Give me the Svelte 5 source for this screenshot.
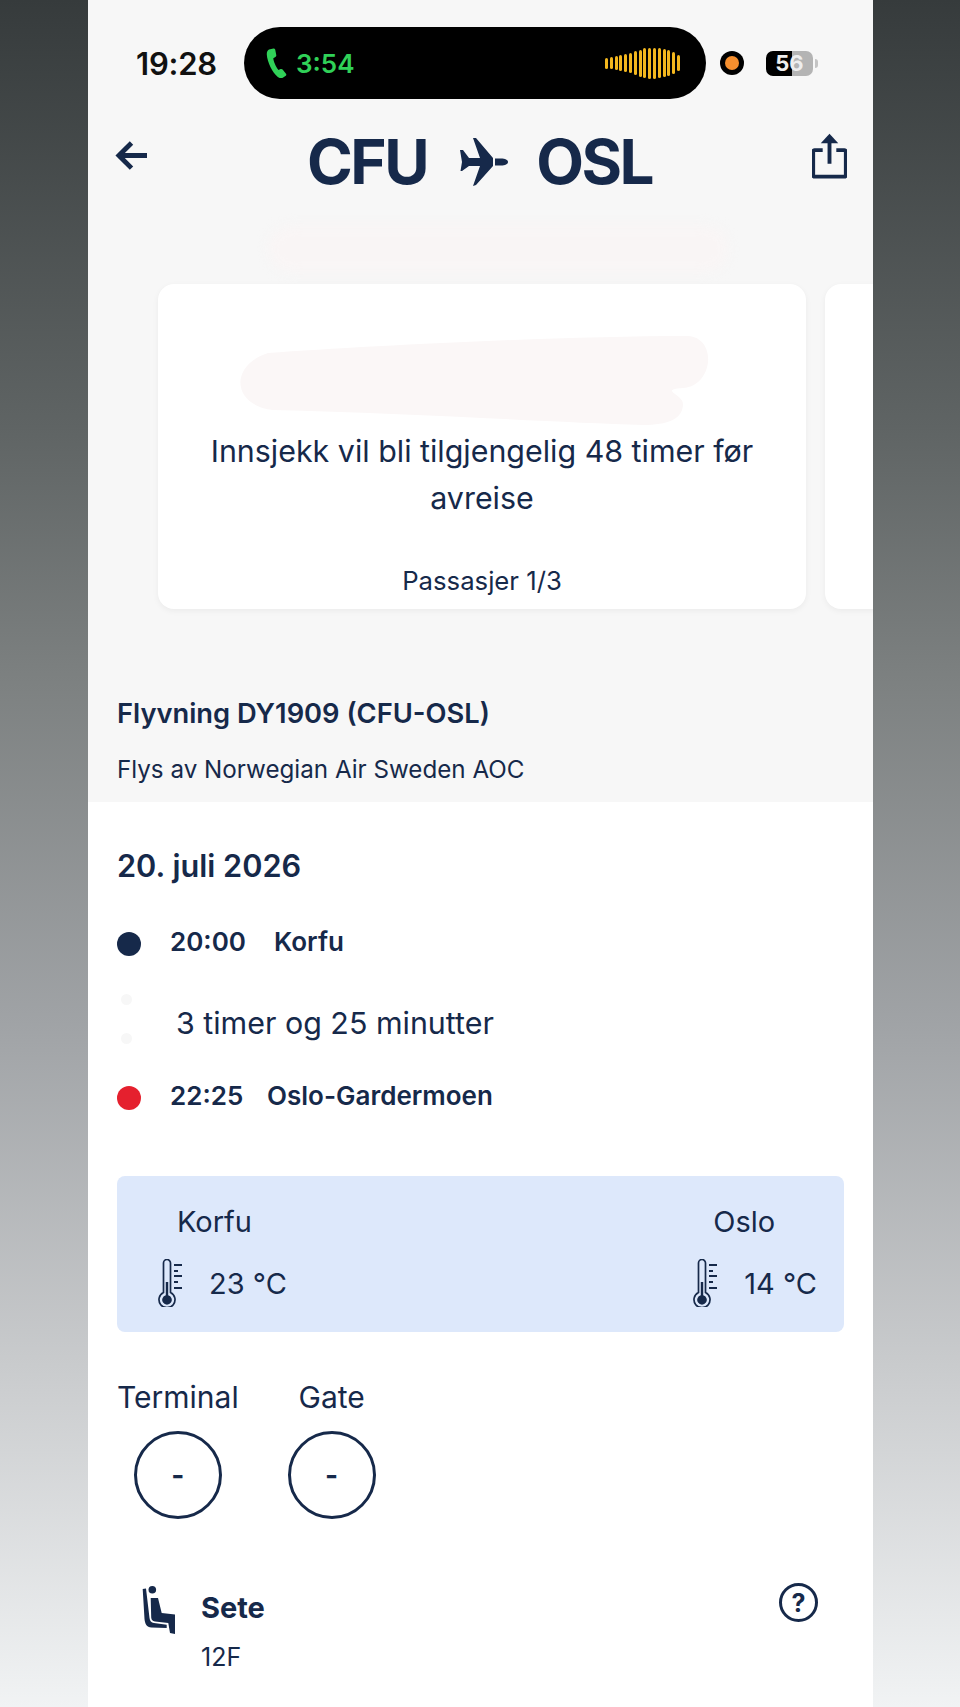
<script lang="ts">
	const temps = [
		{ city: 'Korfu', temp: '23 °C' },
		{ city: 'Oslo', temp: '14 °C' }
	];
	const infoCircles = ['Terminal', 'Gate'];
	// heights of the little audio bars in the island
	const wave = [11, 12, 14, 16, 18, 20, 24, 27, 30, 31, 31, 30, 28, 26, 22, 16];
</script>

{#snippet thermometer()}
	<svg class="thermo" viewBox="0 0 24 48" fill="none" stroke="#16294a">
		<path d="M5.500 33.500V4a3.500 3.500 0 0 1 7 0v29.500a8 8 0 1 1-7 0Z" stroke-width="1.700" />
		<path d="M7.800 23h2.400v13.200a4.800 4.800 0 1 1-2.400 0Z" fill="#16294a" stroke="none" />
		<path d="M16 6h8M16 12h4M16 17h8M16 23h4M16 29h8" stroke-width="1.800" />
	</svg>
{/snippet}

<div class="screen">
	<main class="phone">
		<section class="top">
			<div class="status">
				<span class="clock">19:28</span>
				<div class="island">
					<svg class="phone-icon" viewBox="0 0 22 30">
						<path d="M3 1.500 7.500.5c1 0 1.600.6 1.800 1.400l1 5.400c.1.800-.2 1.400-.9 1.800L7.300 10.300c.2 3 2.500 8.500 5.200 11.700l2.100-.9c.8-.3 1.500-.1 2 .5l3.400 4.200c.5.700.4 1.500-.2 2l-3 2c-1.500.8-3.500.4-5-.8C6.500 24.500 1.200 14 .8 6.500.7 4 1.500 2.300 3 1.500Z" fill="#30d158" />
					</svg>
					<span class="call-time">3:54</span>
					<div class="wave">
						{#each wave as h}
							<i style="height: {h}px"></i>
						{/each}
					</div>
				</div>
				<span class="mic"><i></i></span>
				<span class="battery"><b>56</b></span>
			</div>

			<header class="route">
				<svg class="back" viewBox="0 0 34 34" fill="none" stroke="#16294a" stroke-width="5">
					<path d="M33 16H5M17 3 4 16l13 13" />
				</svg>
				<h1>
					<span>CFU</span>
					<svg class="plane" viewBox="0 0 48 48" fill="#16294a">
						<path d="M13 0h3l17 20v8L16 47l-3 1 7-20H9l-7 5H0.500l1.500-9-2-12h3l6 8h11Z" />
						<path d="M35 20.500h6c4 0 7 1.500 7 3.500s-3 3.500-7 3.500h-6Z" />
					</svg>
					<span>OSL</span>
				</h1>
				<svg class="share" viewBox="0 0 36 46" fill="none" stroke="#16294a" stroke-width="4">
					<path d="M11 17H3a1.500 1.500 0 0 0-1.800 1.500v24A1.500 1.500 0 0 0 3 44.200h30a1.500 1.500 0 0 0 1.800-1.700v-24A1.500 1.500 0 0 0 33 17h-8M18 31V3" />
					<path d="M18 0l9 10H9Z" fill="#16294a" stroke="none" />
				</svg>
			</header>

			<div class="smudge-row"><div class="smudge"></div></div>

			<div class="cards">
				<article class="card">
					<svg class="blot" viewBox="0 0 473 89" fill="#fbf7f7">
						<path d="M30 17C130 10 320 0 450 0c30 2 25 50-5 52-25 2 0 6 0 16 0 15-15 21-40 21-90-3-240-12-370-15C-5 70-10 30 30 17Z" />
					</svg>
					<p class="notice">Innsjekk vil bli tilgjengelig 48 timer før avreise</p>
					<p class="pax">Passasjer 1/3</p>
				</article>
				<article class="card next"></article>
			</div>

			<div class="flight">
				<h2>Flyvning DY1909 (CFU-OSL)</h2>
				<p>Flys av Norwegian Air Sweden AOC</p>
			</div>
		</section>

		<section class="details">
			<h3>20. juli 2026</h3>

			<div class="stop first">
				<span class="dot navy"></span>
				<strong class="time">20:00</strong>
				<strong>Korfu</strong>
			</div>
			<div class="duration">
				<div class="faint"><i></i><i></i></div>
				<span>3 timer og 25 minutter</span>
			</div>
			<div class="stop">
				<span class="dot red"></span>
				<strong class="time short">22:25</strong>
				<strong>Oslo-Gardermoen</strong>
			</div>

			<div class="weather">
				{#each temps as t}
					<div class="place">
						<div class="city">{t.city}</div>
						<div class="reading">
							{@render thermometer()}
							<span>{t.temp}</span>
						</div>
					</div>
				{/each}
			</div>

			<div class="infos">
				{#each infoCircles as label}
					<div class="info">
						<span>{label}</span>
						<div class="ring">-</div>
					</div>
				{/each}
			</div>

			<div class="seat">
				<svg class="seat-icon" viewBox="0 0 34 48" fill="#16294a">
					<circle cx="10.300" cy="3.800" r="3.800" />
					<path d="M8.700 12H16l3.700 15 13.300 1.500V48l-5-1-1.700-10L13 35.500c-2.500-.3-3.500-1.500-3.800-4Z" />
					<path d="M.7 3 4 2.500 7.500 32c.4 3 1.700 4.500 4.500 5l12.700 1.700V42L9.500 41.500C4.500 41 3 38 2.500 33Z" />
				</svg>
				<div class="seat-text">
					<strong>Sete</strong>
					<span>12F</span>
				</div>
				<div class="help">?</div>
			</div>
		</section>
	</main>
</div>

<style>
	:global(body) {
		margin: 0;
	}
	.screen {
		height: 1707px;
		padding-left: 88px;
		overflow: hidden;
		box-sizing: border-box;
		background: linear-gradient(#363b3c 0%, #5f6464 25%, #7d8181 40%, #a0a3a6 60%, #c9cbcd 80%, #f1f3f4 100%);
		font-family: Inter, 'Open Sans', sans-serif;
		color: #16294a;
	}
	.phone {
		width: 785px;
		height: 1707px;
		background: #fff;
	}
	.top {
		height: 802px;
		background: #f7f7f7;
		overflow: hidden;
	}
	.status {
		display: flex;
		align-items: center;
		height: 72px;
		padding: 27px 0 0 48px;
	}
	.clock {
		width: 108px;
		font-size: 31px;
		font-weight: 600;
		color: #111;
		letter-spacing: -0.2px;
	}
	.island {
		display: flex;
		align-items: center;
		box-sizing: border-box;
		width: 462px;
		height: 72px;
		padding: 0 26px 0 22px;
		border-radius: 36px;
		background: #000;
	}
	.phone-icon {
		width: 22px;
		height: 30px;
	}
	.call-time {
		margin-left: 8px;
		font-size: 26px;
		font-weight: 600;
		color: #30d158;
	}
	.wave {
		display: flex;
		align-items: center;
		gap: 1.800px;
		margin-left: auto;
	}
	.wave i {
		width: 3px;
		border-radius: 2px;
		background: #f3b71e;
	}
	.mic {
		display: flex;
		align-items: center;
		justify-content: center;
		width: 24px;
		height: 24px;
		margin-left: 14px;
		border-radius: 50%;
		background: #000;
	}
	.mic i {
		width: 14px;
		height: 14px;
		border-radius: 50%;
		background: #f68f2e;
	}
	.battery {
		display: flex;
		align-items: center;
		justify-content: center;
		width: 47px;
		height: 25px;
		margin-left: 22px;
		border-radius: 7px;
		background: linear-gradient(90deg, #000 56%, #b4b4b4 56%);
		position: relative;
	}
	.battery::after {
		content: '';
		position: absolute;
		right: -5px;
		top: 8px;
		width: 3px;
		height: 9px;
		border-radius: 0 3px 3px 0;
		background: #c4c4c4;
	}
	.battery b {
		font-size: 22px;
		font-weight: 700;
		color: #eee;
	}
	.route {
		display: flex;
		align-items: flex-start;
		height: 80px;
		padding: 38px 26px 0 27px;
	}
	.back {
		width: 33px;
		height: 33px;
		margin-top: 3px;
	}
	.route h1 {
		display: flex;
		align-items: center;
		gap: 33px;
		margin: -6px 0 0 159px;
		font-size: 62px;
		line-height: 62px;
		font-weight: 700;
		letter-spacing: -2.500px;
	}
	.plane {
		width: 48px;
		height: 48px;
		margin-right: -5px;
	}
	.share {
		width: 35px;
		height: 46px;
		margin-left: auto;
		margin-top: -4px;
	}
	.smudge-row {
		display: flex;
		padding-left: 181px;
		height: 67px;
	}
	.smudge {
		width: 459px;
		height: 46px;
		margin-top: 9px;
		border-radius: 23px;
		background: #f9f5f5;
		filter: blur(6px);
	}
	.cards {
		display: flex;
		gap: 19px;
		padding-left: 70px;
	}
	.card {
		position: relative;
		display: flex;
		flex-direction: column;
		align-items: center;
		flex: none;
		box-sizing: border-box;
		width: 648px;
		height: 325px;
		padding: 144px 40px 0;
		border-radius: 16px;
		background: #fff;
		box-shadow: 0 2px 6px rgba(0, 0, 0, 0.05);
	}
	.card.next {
		width: 120px;
		padding: 0;
	}
	.blot {
		position: absolute;
		left: 80px;
		top: 52px;
		width: 473px;
		height: 89px;
	}
	.notice {
		position: relative;
		margin: 0;
		font-size: 30.400px;
		line-height: 47px;
		text-align: center;
	}
	.pax {
		margin: 43px 0 0;
		font-size: 25.700px;
		line-height: 32px;
	}
	.flight {
		padding: 89px 29px 0;
	}
	.flight h2 {
		margin: 0;
		font-size: 27.300px;
		line-height: 32px;
		font-weight: 600;
	}
	.flight p {
		margin: 24px 0 0;
		font-size: 24.200px;
		line-height: 32px;
	}
	.details {
		padding: 44px 29px 0;
	}
	.details h3 {
		margin: 0;
		font-size: 30.700px;
		line-height: 40px;
		font-weight: 600;
	}
	.stop {
		display: flex;
		align-items: center;
		height: 32px;
		font-size: 26px;
	}
	.stop strong {
		font-weight: 600;
	}
	.stop.first {
		margin-top: 39px;
	}
	.dot {
		width: 24px;
		height: 24px;
		margin: 6px 29px 0 0;
		border-radius: 50%;
	}
	.navy {
		background: #16294a;
	}
	.red {
		background: #e5202e;
	}
	.time {
		width: 104px;
	}
	.time.short {
		width: 97px;
	}
	.duration {
		display: flex;
		align-items: center;
		height: 113px;
		margin-top: 9px;
		font-size: 30.400px;
	}
	.faint {
		display: flex;
		flex-direction: column;
		gap: 28px;
		width: 59px;
		margin-top: -7px;
		padding-left: 4px;
		box-sizing: border-box;
	}
	.faint i {
		width: 11px;
		height: 11px;
		border-radius: 50%;
		background: #f7f7f7;
	}
	.weather {
		display: flex;
		justify-content: space-between;
		box-sizing: border-box;
		height: 156px;
		margin-top: 65px;
		padding: 28px 27px 0 41px;
		border-radius: 8px;
		background: #dde8fb;
		font-size: 29px;
	}
	.place:last-child .city {
		padding-left: 20px;
	}
	.city {
		padding-left: 19px;
		line-height: 36px;
	}
	.reading {
		display: flex;
		align-items: center;
		gap: 27px;
		margin-top: 19px;
	}
	.thermo {
		width: 24px;
		height: 48px;
	}
	.infos {
		display: flex;
		gap: 49px;
		margin-top: 47px;
	}
	.info {
		display: flex;
		flex-direction: column;
		align-items: center;
		font-size: 30px;
		line-height: 36px;
	}
	.ring {
		display: flex;
		align-items: center;
		justify-content: center;
		box-sizing: border-box;
		width: 88px;
		height: 88px;
		margin-top: 16px;
		border: 3.500px solid #16294a;
		border-radius: 50%;
		font-size: 28px;
		font-weight: 700;
	}
	.seat {
		display: flex;
		align-items: flex-start;
		margin-top: 67px;
		padding: 0 26px 0 25px;
	}
	.seat-icon {
		width: 34px;
		height: 48px;
	}
	.seat-text {
		display: flex;
		flex-direction: column;
		margin-left: 25px;
		padding-top: 2px;
		font-size: 25px;
	}
	.seat-text strong {
		font-size: 29px;
		line-height: 40px;
		font-weight: 700;
	}
	.seat-text span {
		margin-top: 13px;
		line-height: 32px;
	}
	.help {
		display: flex;
		align-items: center;
		justify-content: center;
		box-sizing: border-box;
		width: 39px;
		height: 39px;
		margin-top: -3px;
		margin-left: auto;
		border: 3px solid #16294a;
		border-radius: 50%;
		font-size: 25px;
		font-weight: 700;
	}
</style>
